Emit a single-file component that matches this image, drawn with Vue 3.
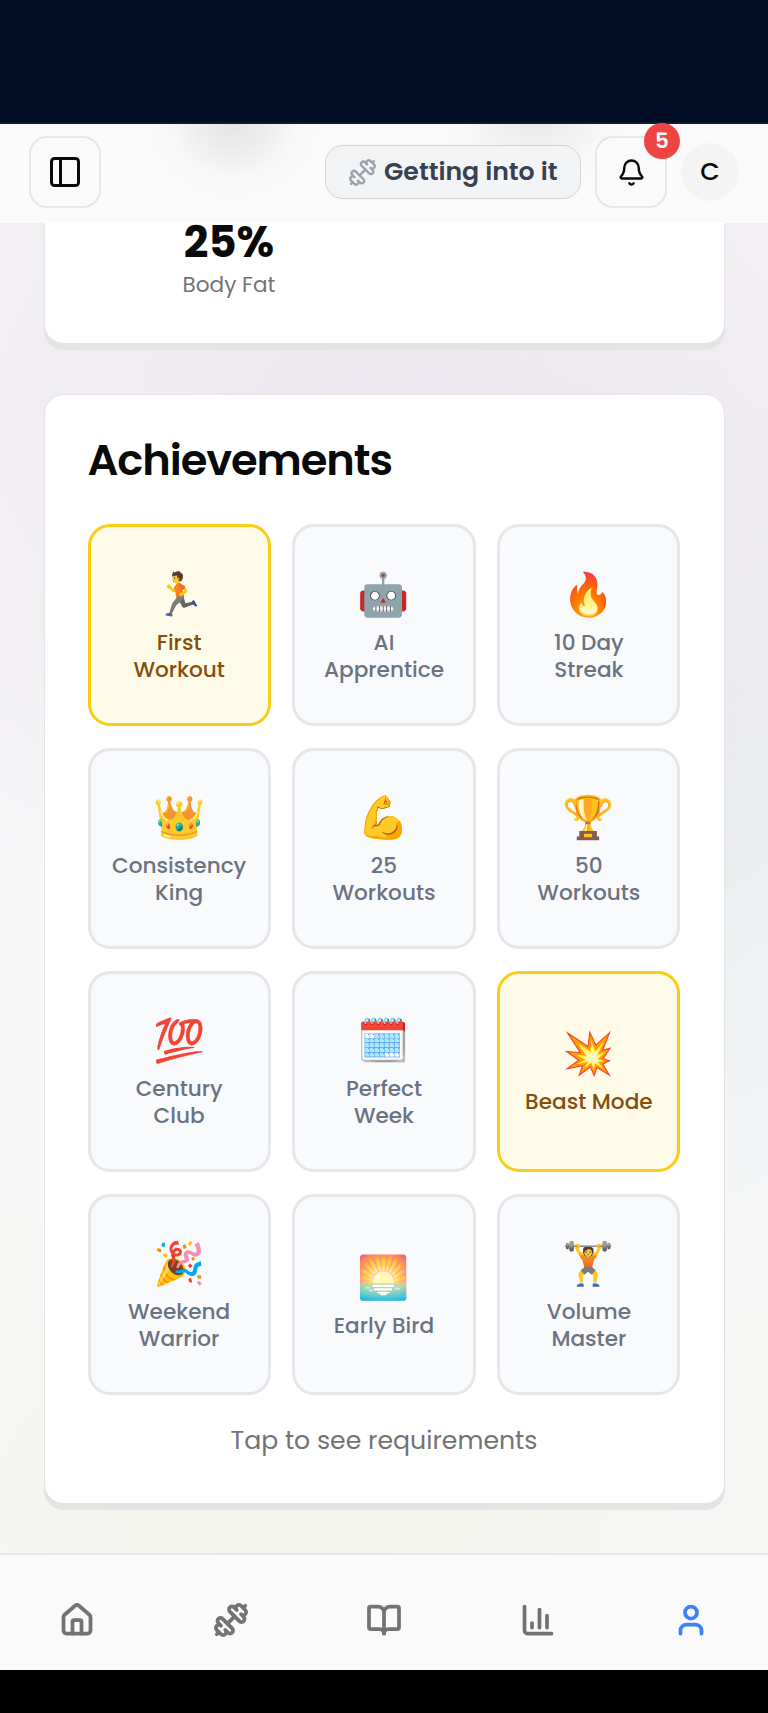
<script setup>
const achievements = [
  { icon: '🏃', lines: ['First', 'Workout'], done: true },
  { icon: '🤖', lines: ['AI', 'Apprentice'] },
  { icon: '🔥', lines: ['10 Day', 'Streak'] },
  { icon: '👑', lines: ['Consistency', 'King'] },
  { icon: '💪', lines: ['25', 'Workouts'] },
  { icon: '🏆', lines: ['50', 'Workouts'] },
  { icon: '💯', lines: ['Century', 'Club'] },
  { icon: '🗓️', lines: ['Perfect', 'Week'] },
  { icon: '💥', lines: ['Beast Mode'], done: true },
  { icon: '🎉', lines: ['Weekend', 'Warrior'] },
  { icon: '🌅', lines: ['Early Bird'] },
  { icon: '🏋️', lines: ['Volume', 'Master'] },
]

const dumbbell = [
  'M17.596 12.768a2 2 0 1 0 2.829-2.829l-1.768-1.767a2 2 0 0 0 2.828-2.829l-2.828-2.828a2 2 0 0 0-2.829 2.828l-1.767-1.768a2 2 0 1 0-2.829 2.829z',
  'm2.5 21.5 1.4-1.4',
  'm20.1 3.9 1.4-1.4',
  'M5.343 21.485a2 2 0 1 0 2.829-2.828l1.767 1.768a2 2 0 1 0 2.829-2.829l-6.364-6.364a2 2 0 1 0-2.829 2.829l1.768 1.767a2 2 0 0 0-2.828 2.829z',
  'm9.6 14.4 4.8-4.8',
]

const tabs = [
  {
    name: 'home',
    paths: [
      'M15 21v-8a1 1 0 0 0-1-1h-4a1 1 0 0 0-1 1v8',
      'M3 10a2 2 0 0 1 .709-1.528l7-5.999a2 2 0 0 1 2.582 0l7 5.999A2 2 0 0 1 21 10v9a2 2 0 0 1-2 2H5a2 2 0 0 1-2-2z',
    ],
  },
  { name: 'workouts', paths: dumbbell },
  {
    name: 'library',
    paths: [
      'M12 7v14',
      'M3 18a1 1 0 0 1-1-1V4a1 1 0 0 1 1-1h5a4 4 0 0 1 4 4 4 4 0 0 1 4-4h5a1 1 0 0 1 1 1v13a1 1 0 0 1-1 1h-6a3 3 0 0 0-3 3 3 3 0 0 0-3-3z',
    ],
  },
  { name: 'stats', paths: ['M3 3v16a2 2 0 0 0 2 2h16', 'M18 17V9', 'M13 17V5', 'M8 17v-3'] },
  {
    name: 'profile',
    active: true,
    paths: ['M19 21v-2a4 4 0 0 0-4-4H9a4 4 0 0 0-4 4v2', 'M8 7a4 4 0 1 0 8 0a4 4 0 1 0-8 0'],
  },
]
</script>

<template>
  <div class="screen">
    <div class="status-bar"></div>

    <header class="topbar">
      <button class="icon-btn">
        <svg class="icon panel" viewBox="0 0 24 24"><rect x="3" y="3" width="18" height="18" rx="2" /><path d="M9 3v18" /></svg>
      </button>
      <div class="actions">
        <div class="level">
          <svg class="icon level-icon" viewBox="0 0 24 24"><path v-for="d in dumbbell" :key="d" :d="d" /></svg>
          <span class="level-text">Getting into it</span>
        </div>
        <button class="icon-btn bell-btn">
          <svg class="icon bell" viewBox="0 0 24 24">
            <path d="M10.268 21a2 2 0 0 0 3.464 0" />
            <path d="M3.262 15.326A1 1 0 0 0 4 17h16a1 1 0 0 0 .74-1.673C19.41 13.956 18 12.499 18 8A6 6 0 0 0 6 8c0 4.499-1.411 5.956-2.738 7.326" />
          </svg>
          <span class="badge">5</span>
        </button>
        <div class="avatar">C</div>
      </div>
    </header>

    <main class="content">
      <section class="card stats">
        <div class="stat">
          <div class="stat-value">25%</div>
          <div class="stat-label">Body Fat</div>
        </div>
      </section>

      <section class="card achievements">
        <h2 class="title">Achievements</h2>
        <div class="grid">
          <div v-for="a in achievements" :key="a.lines.join(' ')" class="tile" :class="{ done: a.done }">
            <div class="emoji">{{ a.icon }}</div>
            <div class="label"><template v-for="(l, i) in a.lines" :key="l"><br v-if="i" />{{ l }}</template></div>
          </div>
        </div>
        <p class="hint">Tap to see requirements</p>
      </section>
    </main>

    <nav class="tabbar">
      <a v-for="t in tabs" :key="t.name" class="tab" :class="{ active: t.active }">
        <svg class="icon tab-icon" viewBox="0 0 24 24"><path v-for="d in t.paths" :key="d" :d="d" /></svg>
      </a>
    </nav>
    <div class="gesture-bar"></div>
  </div>
</template>

<style>
body {
  margin: 0;
}
</style>

<style scoped>
* {
  box-sizing: border-box;
}
.screen {
  display: flex;
  flex-direction: column;
  width: 768px;
  height: 1713px;
  overflow: hidden;
  font-family: Poppins, Inter, "Noto Sans", sans-serif;
  color: #0a0a0a;
  background:
    radial-gradient(ellipse 740px 560px at 400px 420px, rgba(230, 221, 232, 0.6), rgba(235, 228, 237, 0.5) 50%, transparent),
    radial-gradient(ellipse 400px 480px at 660px 800px, rgba(224, 232, 234, 0.7), transparent),
    radial-gradient(ellipse 700px 420px at 300px 1500px, rgba(243, 244, 234, 0.8), transparent),
    #f7f7f8;
}
.status-bar {
  flex: none;
  height: 124px;
  background: #000c24;
  border-bottom: 2px solid #0e1c30;
}
.topbar {
  flex: none;
  height: 99px;
  padding: 0 29px;
  display: flex;
  align-items: center;
  justify-content: space-between;
  background:
    radial-gradient(ellipse 96px 88px at 234px -4px, #e4e4e4, rgba(235, 235, 235, 0.85) 35%, rgba(245, 245, 245, 0.6) 65%, transparent),
    radial-gradient(ellipse 110px 90px at 536px -10px, #e7e7e7, rgba(238, 238, 238, 0.85) 35%, rgba(246, 246, 246, 0.6) 65%, transparent),
    #fafafa;
}
.icon {
  display: block;
  fill: none;
  stroke: currentColor;
  stroke-width: 2;
  stroke-linecap: round;
  stroke-linejoin: round;
}
.icon-btn {
  width: 72px;
  height: 72px;
  margin-top: -3px;
  padding: 0;
  display: flex;
  align-items: center;
  justify-content: center;
  position: relative;
  color: #0a0a0a;
  background: #fafafa;
  border: 2px solid #e7e7e7;
  border-radius: 18px;
}
.panel {
  width: 36px;
  height: 36px;
}
.bell {
  width: 29px;
  height: 29px;
}
.badge {
  position: absolute;
  top: -15px;
  right: -15px;
  width: 36px;
  height: 36px;
  border-radius: 50%;
  background: #ef4444;
  color: #fff;
  font-family: Poppins, Inter, sans-serif;
  font-size: 21.6px;
  font-weight: 600;
  line-height: 36px;
  text-align: center;
}
.actions {
  display: flex;
  align-items: center;
}
.level {
  display: flex;
  align-items: center;
  width: 256px;
  height: 54px;
  margin: -3px 14px 0 0;
  padding-left: 22px;
  background: #f3f4f6;
  border: 1.5px solid #d1d5db;
  border-radius: 18px;
}
.level-icon {
  width: 29px;
  height: 29px;
  margin-right: 7px;
  color: #9ca3af;
}
.level-text {
  margin-top: -1px;
  font-size: 25.2px;
  font-weight: 600;
  color: #374151;
  white-space: nowrap;
}
.avatar {
  width: 58px;
  height: 58px;
  margin: -4px 0 0 14px;
  border-radius: 50%;
  background: #f4f4f4;
  font-size: 25.2px;
  font-weight: 500;
  line-height: 58px;
  text-align: center;
}
.content {
  flex: 1;
  padding: 0 43.5px;
}
.card {
  background: #fff;
  border: 1.5px solid #e5e5e5;
  border-radius: 20px;
  box-shadow: 0 6px 0 #e4e4e4;
}
.stats {
  height: 121px;
  border-top: 0;
  border-radius: 0 0 20px 20px;
}
.stat {
  width: 369px;
  text-align: center;
}
.stat-value {
  height: 40px;
  font-size: 43.2px;
  font-weight: 700;
  line-height: 38px;
}
.stat-label {
  font-size: 21.6px;
  line-height: 44px;
  color: #737373;
}
.achievements {
  margin-top: 50px;
  height: 1110px;
  padding: 0 43px;
}
.title {
  margin: 0;
  height: 129.4px;
  padding-top: 39px;
  font-size: 43.2px;
  font-weight: 600;
  letter-spacing: -0.025em;
  line-height: 52px;
}
.grid {
  display: grid;
  grid-template-columns: repeat(3, 1fr);
  grid-auto-rows: 201.4px;
  gap: 21.8px 21.6px;
}
.tile {
  display: flex;
  flex-direction: column;
  align-items: center;
  justify-content: center;
  color: #6b7280;
  background: #f9fafc;
  border: 3px solid #e5e7eb;
  border-radius: 22px;
}
.tile.done {
  color: #854d0e;
  background: #fefce8;
  border-color: #facc15;
}
.emoji {
  height: 54px;
  margin-bottom: 7px;
  font: 42px/54px "Noto Color Emoji", sans-serif;
}
.label {
  font-size: 21.6px;
  font-weight: 500;
  line-height: 27px;
  text-align: center;
  white-space: nowrap;
}
.hint {
  margin: 28px 0 0;
  font-size: 25.2px;
  line-height: 36px;
  color: #737373;
  text-align: center;
}
.tabbar {
  flex: none;
  height: 117px;
  display: grid;
  grid-template-columns: repeat(5, 1fr);
  align-items: center;
  background: #fafafa;
  border-top: 2px solid #e5e5e5;
}
.tab {
  display: flex;
  justify-content: center;
  padding: 14px 0 0 0.6px;
  color: #737373;
}
.tab.active {
  color: #3b82f6;
}
.tab-icon {
  width: 36px;
  height: 36px;
  stroke-width: 2.5;
}
.gesture-bar {
  flex: none;
  height: 43px;
  background: #000;
}
</style>
